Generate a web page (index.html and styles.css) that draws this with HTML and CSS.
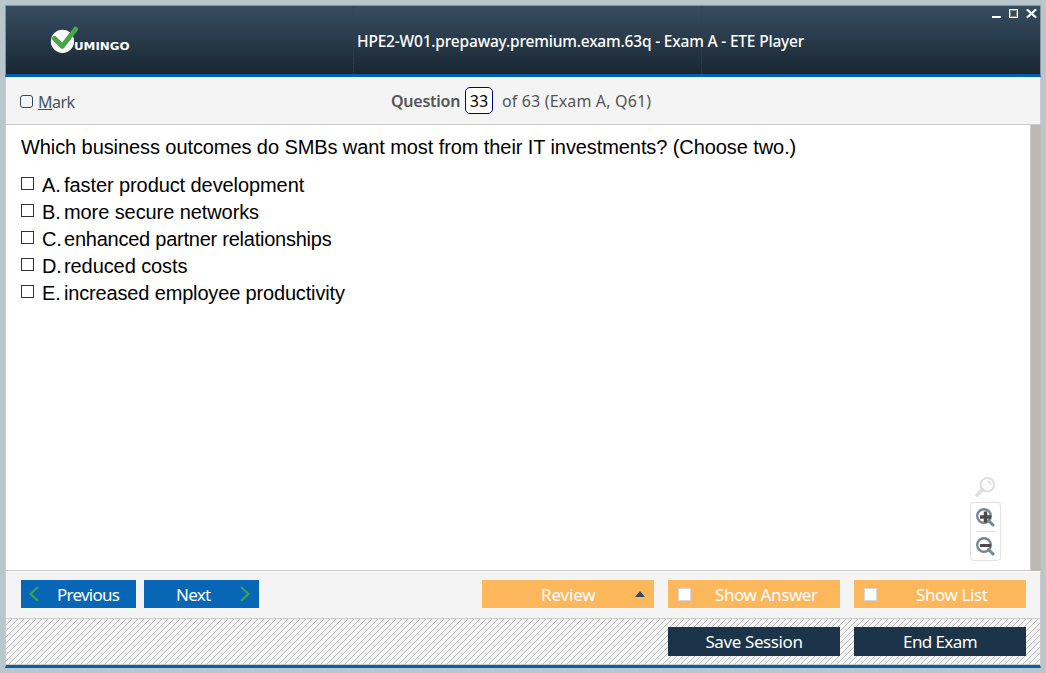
FILE: index.html
```html
<!DOCTYPE html>
<html lang="en">
<head>
<meta charset="utf-8">
<title>ETE Player</title>
<link rel="stylesheet" href="styles.css">
</head>
<body>
<div class="window">
  <header class="titlebar">
    <div class="title-cell brand">
      <svg class="logo" width="82" height="30" viewBox="0 0 82 30">
        <circle cx="12.5" cy="15.3" r="11.6" fill="#fff"/>
        <path d="M4.5 12.5L12.3 20.2L25.6 3.2" fill="none" stroke="#47a447" stroke-width="5" stroke-linecap="round" stroke-linejoin="round"/>
        <text class="logo-text" x="24" y="23.5" textLength="55.5" lengthAdjust="spacingAndGlyphs">UMINGO</text>
      </svg>
    </div>
    <div class="title-cell caption"><span class="caption-text">HPE2-W01.prepaway.premium.exam.63q - Exam A - ETE Player</span></div>
    <div class="title-cell controls">
      <svg width="46" height="10" viewBox="0 0 46 10" shape-rendering="crispEdges">
        <rect x="0" y="7" width="9" height="2" fill="#fff"/>
        <rect x="17.5" y=".5" width="8" height="8" fill="none" stroke="#fff"/>
        <rect x="18.5" y="1.5" width="6" height="6" fill="none" stroke="#87857c"/>
        <path d="M34.8 .3L44.2 8.7M44.2 .3L34.8 8.7" stroke="#fff" stroke-width="2.2" shape-rendering="auto"/>
      </svg>
    </div>
  </header>
  <div class="question-bar">
    <label class="mark"><span class="mark-box"></span><span class="mark-text"><u>M</u>ark</span></label>
    <div class="position"><b class="q-label">Question</b><span class="q-number">33</span><span class="q-total">of 63 (Exam A, Q61)</span></div>
  </div>
  <main class="content">
    <section class="exam">
      <p class="prompt"><span>Which business outcomes do SMBs want most from their IT investments? (Choose two.)</span></p>
      <ul class="choices">
        <li><i class="box"></i><span class="letter">A.</span><span>faster product development</span></li>
        <li><i class="box"></i><span class="letter">B.</span><span>more secure networks</span></li>
        <li><i class="box"></i><span class="letter">C.</span><span class="tight">enhanced partner relationships</span></li>
        <li><i class="box"></i><span class="letter">D.</span><span>reduced costs</span></li>
        <li><i class="box"></i><span class="letter">E.</span><span class="snug">increased employee productivity</span></li>
      </ul>
      <div class="zoom-tools">
        <svg class="lens" width="22" height="22" viewBox="0 0 22 22" fill="none" stroke="#dedede">
          <circle cx="13.3" cy="8.7" r="6.8" stroke-width="2"/>
          <path d="M8.5 13.5L3 19" stroke-width="3.6" stroke-linecap="round"/>
          <path d="M13.5 5.2Q16.5 5.7 16.8 8.7" stroke-width="1.4"/>
        </svg>
        <div class="zoom-box">
          <svg width="19" height="20" viewBox="0 0 19 20" fill="none">
            <circle cx="8" cy="8" r="6.8" stroke="#778792" stroke-width="2.4"/>
            <path d="M12.5 12.5L17 17" stroke="#778792" stroke-width="3" stroke-linecap="round"/>
            <path d="M4 9H15M9.5 3.5V14.5" stroke="#4b4b4b" stroke-width="3.4"/>
          </svg>
          <span class="separator"></span>
          <svg width="19" height="20" viewBox="0 0 19 20" fill="none">
            <circle cx="8" cy="8" r="6.8" stroke="#778792" stroke-width="2.4"/>
            <path d="M12.5 12.5L17 17" stroke="#778792" stroke-width="3" stroke-linecap="round"/>
            <path d="M4 8.5H15" stroke="#4b4b4b" stroke-width="3"/>
          </svg>
        </div>
      </div>
    </section>
    <div class="scrollbar"></div>
  </main>
  <nav class="actions">
    <button class="btn blue prev"><svg width="10" height="16" viewBox="0 0 10 16"><path d="M9 1L1.5 8L9 15" fill="none" stroke="#3fa34c" stroke-width="2.2"/></svg><span>Previous</span></button>
    <button class="btn blue next"><span>Next</span><svg width="10" height="16" viewBox="0 0 10 16"><path d="M1 1L8.5 8L1 15" fill="none" stroke="#3fa34c" stroke-width="2.2"/></svg></button>
    <button class="btn orange review"><span>Review</span><svg width="10" height="6" viewBox="0 0 10 6"><path d="M0 6L5 0L10 6Z" fill="#2f4a60"/></svg></button>
    <button class="btn orange toggle answer"><i class="check"></i><span>Show Answer</span></button>
    <button class="btn orange toggle list"><i class="check"></i><span>Show List</span></button>
  </nav>
  <footer class="session">
    <svg class="hatch" width="100%" height="100%">
      <defs><pattern id="hatch" width="6" height="6" patternUnits="userSpaceOnUse" shape-rendering="crispEdges">
        <path fill="#bfbfbf" d="M5 0h1v1h-1zM4 1h1v1h-1zM3 2h1v1h-1zM2 3h1v1h-1zM1 4h1v1h-1zM0 5h1v1h-1z"/>
      </pattern></defs>
      <rect width="100%" height="100%" fill="url(#hatch)"/>
    </svg>
    <button class="btn navy save"><span>Save Session</span></button>
    <button class="btn navy end"><span>End Exam</span></button>
  </footer>
</div>
</body>
</html>
```
FILE: styles.css
```css
* { box-sizing: border-box; }
body { margin: 0; height: 673px; padding: 5px; background: #b9c6cc; font-family: "Open Sans", "Noto Sans", sans-serif; overflow: hidden; }
.window { width: 1036px; height: 663px; display: flex; flex-direction: column; }
.titlebar { height: 72px; flex: none; display: grid; grid-template-columns: 347px 348px 1fr; border: 1px solid #87949a; border-bottom: 3px solid #0061b1; background: linear-gradient(#364d61, #1a2733); }
.title-cell + .title-cell { border-left: 1px dotted #2e3b78; }
.brand { padding: 20px 0 0 44px; }
.logo { display: block; }
.logo-text { font: bold 10.5px "DejaVu Sans", sans-serif; fill: #fff; }
.caption { padding: 24px 0 0 3px; color: #fff; font: 500 15.5px/22px "Noto Sans", sans-serif; white-space: nowrap; }
.caption-text { letter-spacing: -.19px; position: relative; }
.title-cell.controls { display: flex; justify-content: flex-end; padding: 3px 2px 0 0; }
.question-bar { height: 48px; flex: none; display: flex; background: #f4f4f4; border: solid #ccc; border-width: 0 1px 1px; font: 16px/22px "Noto Sans", sans-serif; color: #555; }
.mark { width: 371px; padding: 14px 0 0 14px; display: flex; }
.mark-box { width: 13px; height: 13px; margin: 4px 5px 0 0; border: 1px solid #34495e; border-radius: 3px; }
.mark-text { color: #3f5365; letter-spacing: -.5px; }
.position { display: flex; padding: 10px 0 0 14px; height: 40px; line-height: 28px; }
.q-label { width: 74px; font-weight: 600; letter-spacing: -.25px; white-space: nowrap; }
.q-number { width: 28px; height: 27px; border: 1px solid #000080; border-radius: 5px; background: #fff; color: #000; text-align: center; line-height: 27px; }
.q-total { padding-left: 9px; letter-spacing: .15px; white-space: nowrap; }
.content { height: 446px; flex: none; display: flex; }
.exam { flex: 1; position: relative; background: #fff; border: solid #ccc; border-width: 0 1px 1px; font: 20px/27px "Liberation Sans", Arial, sans-serif; color: #000; letter-spacing: -.085px; }
.scrollbar { width: 10px; background: #bab9b5; }
.prompt { margin: 0; padding: 9px 0 0 15px; white-space: nowrap; }
.choices { list-style: none; margin: 11px 0 0; padding: 0 0 0 15px; }
.choices li { display: flex; height: 27px; white-space: nowrap; }
.box { width: 13px; height: 13px; margin: 5px 8px 0 0; border: 1px solid #333; }
.letter { width: 22px; }
.tight { letter-spacing: -.24px; }
.snug { letter-spacing: -.16px; }
.zoom-tools { position: absolute; right: 29px; bottom: 9px; width: 31px; }
.lens { display: block; margin: 0 0 4px 4px; }
.zoom-box { height: 59px; border: 1px solid #e2e2e2; border-radius: 4px; box-shadow: 0 0 1px #ddd; display: flex; flex-direction: column; align-items: center; padding-top: 5px; }
.zoom-box svg { flex: none; }
.separator { width: 19px; height: 1px; margin: 3px 0 5px; background: #ddd; flex: none; }
.actions { height: 48px; flex: none; display: flex; padding: 8px 14px 0 15px; background: #f4f4f4; border: solid #ccc; border-width: 0 1px 1px; border-top: 1px solid #fff; }
.btn { border: 0; padding: 0; height: 28px; display: flex; align-items: center; color: #fff; font: 17px/28px "Noto Sans", sans-serif; letter-spacing: -.4px; white-space: nowrap; }
.actions .btn span { padding-top: 1px; }
.blue { width: 115px; background: #0866b6; }
.prev { padding-left: 8px; gap: 18px; margin-right: 8px; letter-spacing: -.75px; }
.next { padding-left: 32px; padding-right: 9px; justify-content: space-between; letter-spacing: -.75px; }
.orange { width: 172px; background: #ffb75b; }
.review { margin-left: 223px; padding: 0 9px 0 59px; justify-content: space-between; letter-spacing: -.15px; }
.toggle { margin-left: 14px; padding-left: 10px; }
.check { width: 13px; height: 13px; background: #fff; border: 1px solid #d6d6d6; }
.answer .check { margin-right: 24px; }
.list .check { margin-right: 39px; }
.session { position: relative; flex: 1; display: flex; justify-content: flex-end; gap: 14px; padding: 8px 14px 0; background: #f4f4f4; border: solid #ccc; border-width: 0 1px; border-bottom: 3px solid #0061b1; box-shadow: inset 0 -1px #ccc; }
.hatch { position: absolute; left: 0; top: 0; }
.navy { position: relative; width: 172px; height: 29px; background: #1b344a; justify-content: center; }
.end { letter-spacing: -.6px; }
```
